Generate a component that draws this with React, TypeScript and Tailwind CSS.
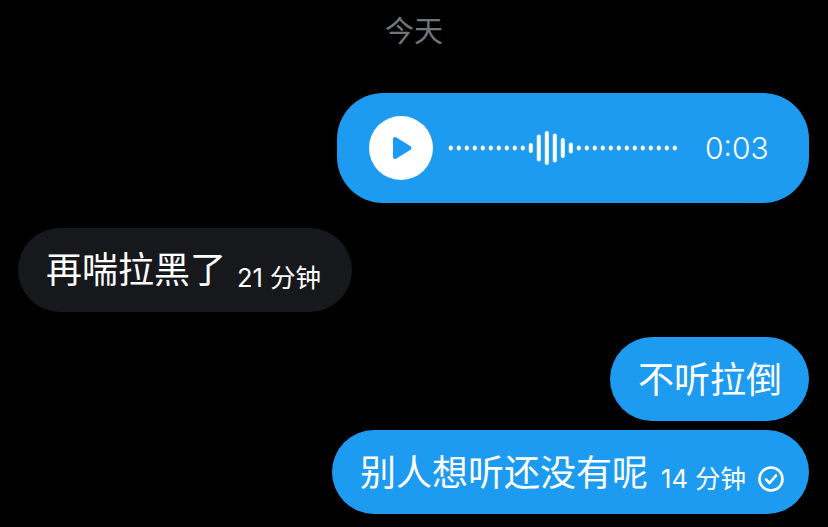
// App.tsx - chat thread with a voice message
const CJK = "font-['Inter','Noto_Sans_CJK_SC',sans-serif]";

const BAR_HEIGHTS = [
  5, 5, 5, 5, 5, 5, 5, 5, 5, 5, 10, 27, 34, 29, 20, 11, 5, 5, 5, 5, 5, 5, 5, 5, 5, 5, 5, 5, 5,
];

function PlayButton() {
  return (
    <div className="flex h-16 w-16 shrink-0 items-center justify-center rounded-full bg-white">
      <svg width="64" height="64" viewBox="0 0 64 64">
        <path
          d="M26 23 L26 41 L40.5 32 Z"
          fill="#1d9bf0"
          stroke="#1d9bf0"
          strokeWidth="4"
          strokeLinejoin="round"
        />
      </svg>
    </div>
  );
}

function Waveform() {
  return (
    <svg width="232" height="40" viewBox="0 0 232 40" className="shrink-0">
      {BAR_HEIGHTS.map((h, i) => (
        <rect
          key={i}
          x={0.8 + i * 8}
          y={20 - h / 2}
          width="4"
          height={h}
          rx="2"
          fill="#fff"
        />
      ))}
    </svg>
  );
}

function CheckCircle() {
  return (
    <svg width="28" height="28" viewBox="0 0 28 28" className="shrink-0">
      <circle cx="14" cy="14" r="11.5" fill="none" stroke="#fff" strokeWidth="2.6" />
      <path
        d="M9 14.5 L12.6 18 L19 10.5"
        fill="none"
        stroke="#fff"
        strokeWidth="2.6"
        strokeLinecap="round"
        strokeLinejoin="round"
      />
    </svg>
  );
}

export default function App() {
  return (
    <div className={`h-[527px] w-[828px] overflow-hidden bg-black text-white ${CJK}`}>
      <div className="flex h-[62px] items-center justify-center text-[29px] leading-none text-[#71767b]">
        今天
      </div>

      <div className="mt-[31px] flex flex-col pl-[18px] pr-[19px]">
        {/* Voice message */}
        <div className="flex h-[110px] w-[472px] items-center self-end rounded-[46px] bg-[#1d9bf0] pl-[32px]">
          <PlayButton />
          <div className="ml-[15px]">
            <Waveform />
          </div>
          <span className="ml-[25px] text-[30px] font-light leading-none">0:03</span>
        </div>

        {/* Incoming */}
        <div className="mt-[25px] flex h-[84px] w-[334px] items-center self-start rounded-[42px] bg-[#16181c] pl-[28px]">
          <span className="text-[36px] font-normal leading-none">再喘拉黑了</span>
          <span className="ml-[11px] mt-[16px] text-[25.5px] font-normal leading-none">
            21 分钟
          </span>
        </div>

        {/* Outgoing */}
        <div className="mt-[25px] flex h-[84px] w-[199px] items-center self-end rounded-[42px] bg-[#1d9bf0] pl-[28px]">
          <span className="mt-[2px] text-[36px] font-normal leading-none">不听拉倒</span>
        </div>

        <div className="mt-[9px] flex h-[84px] w-[477px] items-center self-end rounded-[42px] bg-[#1d9bf0] pl-[28px]">
          <span className="mt-[2px] text-[36px] font-normal leading-none">别人想听还没有呢</span>
          <span className="ml-[13px] mt-[14px] text-[25.5px] font-normal leading-none">
            14 分钟
          </span>
          <div className="ml-[11px] mt-[14px]">
            <CheckCircle />
          </div>
        </div>
      </div>
    </div>
  );
}
